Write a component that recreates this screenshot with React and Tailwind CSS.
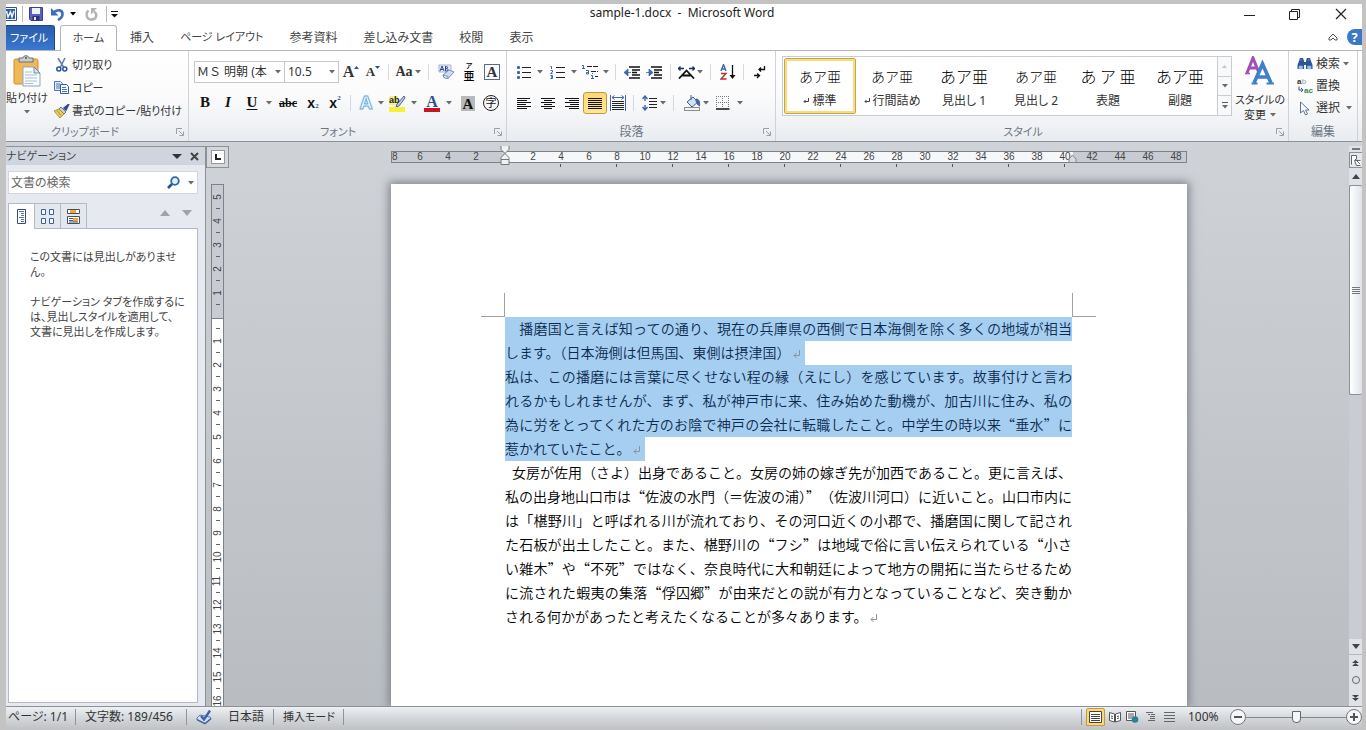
import React from "react";

const UI = "font-['Noto_Sans','Noto_Sans_CJK_JP',sans-serif] [font-feature-settings:'palt']";

const Caret = ({ className = "text-[#6b6b6b]" }) => (
  <svg width="6" height="4" viewBox="0 0 6 4" className={"shrink-0 " + className} fill="currentColor">
    <path d="M0 0h6L3 3.6z" />
  </svg>
);
const Drop = ({ w = "w-2", label }) => (
  <button aria-label={label} className={"flex h-[22px] shrink-0 items-center justify-center " + w}>
    <Caret />
  </button>
);
const Sep = ({ w }) => (
  <span className={"flex h-[22px] shrink-0 items-center justify-center " + w}>
    <span className="h-4 w-px bg-[#d5d8dc]" />
  </span>
);
const Tool = ({ w = "w-[22px]", label, className = "", children }) => (
  <button aria-label={label} className={"flex h-[22px] shrink-0 items-center justify-center " + w + " " + className}>
    {children}
  </button>
);
const Launcher = ({ label }) => (
  <button aria-label={label} className="absolute right-1 bottom-[5px]">
    <svg width="8" height="8" viewBox="0 0 8 8" fill="none" stroke="#9aa0a8">
      <path d="M.5 6V.5H6M3 3l4 4M7.5 3.5v4h-4" />
    </svg>
  </button>
);
const Group = ({ label, launcher = true, className, labelClass = "", children }) => (
  <section className={"relative flex shrink-0 flex-col border-r border-[#cfd3d8] " + className}>
    <div className="min-h-0 flex-1">{children}</div>
    <div className={"h-5 text-center leading-[22px] text-[#6c7684] " + labelClass}>{label}</div>
    {launcher && <Launcher label={label + "の詳細"} />}
  </section>
);
const Lines = ({ rows, w = 14, h = 13, stroke = "#111" }) => (
  <svg width={w} height={h} viewBox={`0 0 ${w} ${h}`} stroke={stroke} fill="none">
    {rows.map(([a, b], i) => (
      <path key={i} d={`M${a} ${i * 2 + 1.5}H${b}`} />
    ))}
  </svg>
);
const ReturnMark = ({ color = "#8a93a0" }) => (
  <svg width="8" height="9" viewBox="0 0 8 9" fill="none" stroke={color} className="ml-0.5 inline-block">
    <path d="M6.5 0v5.5H1M3.5 3L1 5.5 3.5 8" />
  </svg>
);

const WordIcon = () => (
  <svg width="11" height="16" viewBox="0 0 11 16">
    <path d="M0 1.500h10.500v13H0" fill="#fff" stroke="#2b579a" />
    <path d="M0 3h9v10H0z" fill="#2a5fb0" />
    <path d="M.5 5l1.500 6L4.500 6 6 11l2-6" fill="none" stroke="#fff" strokeWidth="1.400" />
  </svg>
);
const SaveIcon = () => (
  <svg width="14" height="14" viewBox="0 0 14 14">
    <path d="M.5.5h13v13H2L.5 12z" fill="#5a5fc4" stroke="#3a3f93" />
    <path d="M3 1h8v6H3z" fill="#eef2fb" />
    <path d="M3.5 9h7v4.5h-7z" fill="#2e3270" />
    <path d="M5 10h2v3H5z" fill="#e8ebf7" />
  </svg>
);
const UndoIcon = () => (
  <svg width="14" height="13" viewBox="0 0 14 13" fill="none">
    <path d="M3 4c4-3 8.500-2 8.500 2 0 3-1.500 4.500-4.500 6" stroke="#3a6cc0" strokeWidth="2.6" />
    <path d="M0 0v7.500h7.500z" fill="#3a6cc0" />
  </svg>
);
const RedoIcon = () => (
  <svg width="13" height="13" viewBox="0 0 13 13" fill="none">
    <path d="M3.5 2.500C.5 5 1 11.500 6.500 11.500S12.500 6 9 3.500" stroke="#b4b4b4" strokeWidth="2.400" />
    <path d="M6 0h6l-6 6.500z" fill="#b4b4b4" />
  </svg>
);
const PasteIcon = () => (
  <svg width="28" height="32" viewBox="0 0 28 32">
    <rect x="1" y="4" width="24" height="25" rx="1.5" fill="#efb95a" stroke="#c98e33" />
    <path d="M6 3h4c0-3 6-3 6 0h4v4H6z" fill="#c9ccd2" stroke="#6c7077" />
    <circle cx="13" cy="3" r="1" fill="#555" />
    <path d="M10 12h11l6 6v13H10z" fill="#fbfdff" stroke="#8fa5c4" />
    <path d="M21 12v6h6z" fill="#dbe6f5" stroke="#6f8bb5" />
    <path d="M12 17h7M12 20h12M12 23h12M12 26h12M12 28.500h8" stroke="#a9bedb" />
  </svg>
);
const CutIcon = () => (
  <svg width="12" height="14" viewBox="0 0 12 14" fill="none">
    <path d="M2 0l5.500 9M9 0L4.500 9" stroke="#6580a8" strokeWidth="1.600" />
    <circle cx="2.800" cy="11" r="2" stroke="#27519e" strokeWidth="1.500" />
    <circle cx="8.800" cy="11" r="2" stroke="#27519e" strokeWidth="1.500" />
  </svg>
);
const CopyIcon = () => (
  <svg width="15" height="13" viewBox="0 0 15 13">
    <path d="M.5.500h6l2 2v7h-8z" fill="#e3eefc" stroke="#4a77b8" />
    <path d="M2 3h4M2 5h5M2 7h5" stroke="#4a77b8" />
    <path d="M6.500 3.500h6l2 2v7h-8z" fill="#f4f9ff" stroke="#2c5a9f" />
    <path d="M8 6.500h4M8 8.500h5M8 10.500h5" stroke="#4a77b8" />
  </svg>
);
const BrushIcon = () => (
  <svg width="16" height="14" viewBox="0 0 16 14">
    <path d="M15 0l-5 4 2 2z" fill="#2c4f8f" stroke="#2c4f8f" strokeWidth="1.500" />
    <path d="M7 3l5 5-2 2-5-5z" fill="#c8cdd6" stroke="#6f7886" />
    <path d="M5 5l5 5-4 4L0 7z" fill="#e8cf55" stroke="#9d8127" strokeWidth=".8" />
    <path d="M3 6.500l4 5" stroke="#b4932d" />
  </svg>
);
const EraserIcon = () => (
  <svg width="17" height="16" viewBox="0 0 17 16">
    <path d="M1 1h12v7H1z" fill="#e6edf9" stroke="#8ea2cc" strokeWidth=".8" />
    <path d="M2 7l2-5 2 5M3 5.500h2M7.500 2v5M7.500 2.500c3 0 3 2 0 2 3.500 0 3.500 2.500 0 2.500" fill="none" stroke="#2d4485" />
    <path d="M5 11l6-5 5 2-6 6.500-4-1z" fill="#cfdcf0" stroke="#5c78ab" strokeWidth=".8" />
    <path d="M5 11l5 1.500v2l-4-1z" fill="#fff" stroke="#5c78ab" strokeWidth=".8" />
  </svg>
);
const BulletIcon = () => (
  <svg width="14" height="14" viewBox="0 0 14 14">
    <path d="M5 2.500h9M5 7.500h9M5 12.500h9" stroke="#222" />
    <g fill="#3c65b0"><rect width="3" height="3" y="1" rx="1" /><rect width="3" height="3" y="6" rx="1" /><rect width="3" height="3" y="11" rx="1" /></g>
  </svg>
);
const NumberIcon = () => (
  <svg width="15" height="14" viewBox="0 0 15 14" fill="none">
    <path d="M6 2.500h9M6 7.500h9M6 12.500h9" stroke="#222" />
    <path d="M.5 1.500h1v2.500M.5 5.500h2v1.500l-2 1.500h2M.5 10.500h2v1.500h-1.500 1.500v1.500h-2" stroke="#3c65b0" />
  </svg>
);
const MultiIcon = () => (
  <svg width="17" height="16" viewBox="0 0 17 16" fill="none">
    <path d="M5 2.500h11M9 7.500h7M13 12.500h3" stroke="#222" strokeDasharray="5 1" />
    <path d="M0 1.500h1.500V5M0 4.500h3M4 6.500h2.500v3.500H4.500V8.500h2M9 11.500h1.500v3.500M9 14.500h3M10 9.500h1" stroke="#3c65b0" />
  </svg>
);
const IndentIcon = ({ out }) => (
  <svg width="16" height="13" viewBox="0 0 16 13" fill="none">
    <path d="M5 1h11M8 4h8M8 6.500h5M8 9h8M5 12h11" stroke="#111" strokeWidth="1.500" />
    {out ? <path d="M0 6.500L4 3v7zM3 6.500h4" fill="#3c65b0" stroke="#3c65b0" strokeWidth=".8" /> : <path d="M7 6.500L3 3v7zM0 6.500h4" fill="#3c65b0" stroke="#3c65b0" strokeWidth=".8" />}
  </svg>
);
const AsianIcon = () => (
  <svg width="17" height="13" viewBox="0 0 17 13" fill="none">
    <path d="M1 12.500l7.500-8 7.500 8M4.500 9.500h8" stroke="#111" strokeWidth="1.800" />
    <path d="M0 2.500h6M17 2.500h-6M2.500.5l-2 2 2 2M14.500.5l2 2-2 2" stroke="#1f2f63" strokeWidth="1.300" />
  </svg>
);
const SortIcon = () => (
  <svg width="16" height="16" viewBox="0 0 16 16" fill="none">
    <path d="M1 7l2.500-6.500L6 7M2 5h3" stroke="#3c65b0" strokeWidth="1.400" />
    <path d="M1 9.500h5L1 15h5.500" stroke="#b03434" strokeWidth="1.400" />
    <path d="M12.500 1v12" stroke="#111" strokeWidth="1.300" />
    <path d="M9.500 11h6l-3 4z" fill="#111" />
  </svg>
);
const MarksIcon = () => (
  <svg width="12" height="13" viewBox="0 0 12 13" fill="none" stroke="#111" strokeWidth="1.300">
    <path d="M10.500 0v3.500H5M7 1.500L5 3.500l2 2M0 9.500h5M3 7.500l2.500 2-2.500 2.500" />
  </svg>
);
const DistributeIcon = () => (
  <svg width="16" height="16" viewBox="0 0 16 16" fill="none">
    <path d="M.5 0v16M15.500 0v16M2 2.500h12M4.500.5l-2.500 2 2.500 2M11.500.5l2.500 2-2.500 2" stroke="#3c65b0" />
    <path d="M2 6.500h12M2 8.500h12M2 10.500h12M2 12.500h12M2 14.500h12" stroke="#222" />
  </svg>
);
const SpacingIcon = () => (
  <svg width="15" height="16" viewBox="0 0 15 16" fill="none">
    <path d="M3 1v5M3 10v5M.5 4L3 1l2.500 3M.5 12L3 15l2.500-3" stroke="#3c65b0" strokeWidth="1.400" />
    <path d="M7 3.500h8M7 6.500h8M7 9.500h8M7 12.500h8" stroke="#222" />
  </svg>
);
const FillIcon = () => (
  <svg width="17" height="16" viewBox="0 0 17 16" fill="none">
    <path d="M3 7l6-5 5 5-6 5z" fill="#cfe0f7" stroke="#3f5f96" />
    <path d="M7 0v5" stroke="#3f5f96" />
    <path d="M12 4c3 0 4 3 3.500 7-2-1-2.500-3-3.500-5z" fill="#3c65b0" stroke="#3f5f96" />
    <rect x=".5" y="12.500" width="15" height="3" fill="#f3f3f3" stroke="#8c8c8c" />
  </svg>
);
const BorderIcon = () => (
  <svg width="14" height="14" viewBox="0 0 14 14" fill="none">
    <path d="M.5 0v12M12.500 0v12M6.500 0v12M0 .5h13M0 6.500h13" stroke="#777" strokeDasharray="1 1" />
    <path d="M0 13h13.500" stroke="#111" strokeWidth="1.500" />
  </svg>
);
const HighlightIcon = () => (
  <svg width="17" height="17" viewBox="0 0 17 17">
    <path d="M0 1h9v9H0z" fill="#f5ef86" />
    <path d="M15 1l-7 8-1 3 3-1 6-8z" fill="#b9c8e3" stroke="#44577e" strokeWidth=".9" />
    <rect y="12" width="16" height="5" fill="#f6ef3c" />
    <text x="0" y="8" fontSize="9" fontFamily="Liberation Sans" fill="#222">ab</text>
  </svg>
);
const StyleAIcon = () => (
  <svg width="30" height="30" viewBox="0 0 30 30" fill="none">
    <path d="M2 17L8 2l6 15M4 12h8" stroke="#a24fb5" strokeWidth="3" />
    <path d="M0 17.500h5" stroke="#a24fb5" strokeWidth="1.500" />
    <path d="M9 27L17.500 8 26 27M12 21h11" stroke="#3f7fcd" strokeWidth="3.600" />
    <path d="M6.500 27.500h6M21.500 27.500H29" stroke="#3f7fcd" strokeWidth="2" />
  </svg>
);
const FindIcon = () => (
  <svg width="16" height="14" viewBox="0 0 16 14">
    <path d="M2 4l1-3h3l1 3v8H.5V8zM14 4l-1-3h-3L9 4v8h6.500V8z" fill="#2b5797" />
    <path d="M7 5h2v3H7z" fill="#2b5797" />
    <path d="M2 9h3.500v3H2zM10.500 9H14v3h-3.500zM3 3h2M11 3h2" fill="#9dbbe6" stroke="#9dbbe6" strokeWidth=".5" />
  </svg>
);
const ReplaceIcon = () => (
  <svg width="17" height="16" viewBox="0 0 17 16">
    <text x="0" y="6" fontSize="8" fontWeight="bold" fontFamily="Liberation Sans" fill="#333">a<tspan fill="#b9b9b9">b</tspan></text>
    <text x="7" y="15" fontSize="8" fontWeight="bold" fontFamily="Liberation Sans" fill="#2e8b3e">ac</text>
    <path d="M2 8.500v3.500h4M4 10l2 2-2 2" fill="none" stroke="#2b5797" />
  </svg>
);
const CursorIcon = () => (
  <svg width="11" height="15" viewBox="0 0 11 15">
    <path d="M1.500 1v11l3-2.500 2 4.500 2-1-2-4h3.500z" fill="#fff" stroke="#5d7297" />
  </svg>
);

const OutlineA = () => (
  <span className="font-['Liberation_Sans',sans-serif] text-[18px] leading-none font-bold text-white [-webkit-text-stroke:1px_#6fb0dc] [text-shadow:0_0_2px_#8cc4ea]">A</span>
);

const tabs = [
  ["挿入", "text-xs"],
  ["ページ レイアウト", "text-[11px]"],
  ["参考資料", "text-xs"],
  ["差し込み文書", "text-xs"],
  ["校閲", "text-xs"],
  ["表示", "text-xs"],
];
const styles = [
  ["あア亜", "標準", true, "text-[14px]"],
  ["あア亜", "行間詰め", true, "text-[14px]"],
  ["あア亜", "見出し 1", false, "text-[16px]"],
  ["あア亜", "見出し 2", false, "text-[14px]"],
  ["あ ア 亜", "表題", false, "text-[16px]"],
  ["あア亜", "副題", false, "text-[16px]"],
];
const lines = [
  { text: "　播磨国と言えば知っての通り、現在の兵庫県の西側で日本海側を除く多くの地域が相当", selected: true },
  { text: "します。（日本海側は但馬国、東側は摂津国）", selected: true, end: true },
  { text: "私は、この播磨には言葉に尽くせない程の縁（えにし）を感じています。故事付けと言わ", selected: true },
  { text: "れるかもしれませんが、まず、私が神戸市に来、住み始めた動機が、加古川に住み、私の", selected: true },
  { text: "為に労をとってくれた方のお陰で神戸の会社に転職したこと。中学生の時以来“垂水”に", selected: true },
  { text: "惹かれていたこと。", selected: true, end: true },
  { text: "女房が佐用（さよ）出身であること。女房の姉の嫁ぎ先が加西であること。更に言えば、", indent: true },
  { text: "私の出身地山口市は“佐波の水門（＝佐波の浦）”（佐波川河口）に近いこと。山口市内に" },
  { text: "は「椹野川」と呼ばれる川が流れており、その河口近くの小郡で、播磨国に関して記され" },
  { text: "た石板が出土したこと。また、椹野川の“フシ”は地域で俗に言い伝えられている“小さ" },
  { text: "い雑木”や“不死”ではなく、奈良時代に大和朝廷によって地方の開拓に当たらせるため" },
  { text: "に流された蝦夷の集落“俘囚郷”が由来だとの説が有力となっていることなど、突き動か" },
  { text: "される何かがあったと考えたくなることが多々あります。", end: true },
];
const evens = (a, b) => {
  const r = [];
  for (let i = a; i <= b; i += 2) r.push(i);
  return r;
};

function TitleBar() {
  return (
    <header className="relative flex h-5 shrink-0 items-center bg-white">
      <WordIcon />
      <span className="mr-[6px] ml-[5px] h-4 w-px bg-[#bbb]" />
      <button aria-label="上書き保存"><SaveIcon /></button>
      <button aria-label="元に戻す" className="ml-2"><UndoIcon /></button>
      <button aria-label="元に戻す一覧" className="ml-[5px]"><Caret className="text-black" /></button>
      <button aria-label="やり直し" className="ml-[9px]"><RedoIcon /></button>
      <span className="mr-1 ml-2 h-4 w-px bg-[#bbb]" />
      <button aria-label="クイック アクセスのカスタマイズ">
        <svg width="7" height="7" viewBox="0 0 7 7"><path d="M0 .5h7" stroke="#111" /><path d="M0 3h7L3.500 6.500z" fill="#111" /></svg>
      </button>
      <h1 className="absolute inset-x-0 -top-px pr-1 text-center text-xs leading-5 text-[#222]">sample-1.docx&nbsp; -&nbsp; Microsoft Word</h1>
      <div className="relative ml-auto flex items-center pr-[15px]">
        <button aria-label="最小化" className="mr-[34px]"><svg width="11" height="11" viewBox="0 0 11 11" stroke="#222"><path d="M0 6.500h11" /></svg></button>
        <button aria-label="元のサイズに戻す" className="mr-[35px]"><svg width="11" height="11" viewBox="0 0 11 11" fill="none" stroke="#222"><path d="M.5 2.500h8v8h-8zM2.500 2.500v-2h8v8h-2" /></svg></button>
        <button aria-label="閉じる"><svg width="12" height="12" viewBox="0 0 12 12" stroke="#222" strokeWidth="1.200"><path d="M1 1l10 10M11 1L1 11" /></svg></button>
      </div>
    </header>
  );
}

function TabBar() {
  return (
    <nav className="flex h-[27px] shrink-0 items-end border-b border-[#b3b7bd] bg-white text-xs">
      <button className="mr-[5px] flex h-[25px] w-[49px] items-center justify-start rounded-tr-[3px] border-t border-r border-[#1e4787] bg-linear-to-b from-[#2a5cac] to-[#3a78d0] pl-1 text-[11px] text-white">ファイル</button>
      <button className="-mb-px h-[26px] w-[57px] rounded-t-[3px] border border-b-0 border-[#b3b7bd] bg-white text-[11px] text-[#444]">ホーム</button>
      {tabs.map(([t, size]) => (
        <button key={t} className={"h-[26px] px-[13px] pt-px text-[#444] " + size}>{t}</button>
      ))}
      <div className="ml-auto flex h-[26px] items-center gap-[9px]">
        <button aria-label="リボンの最小化">
          <svg width="10" height="8" viewBox="0 0 10 8" fill="#fff" stroke="#555"><path d="M1 5l4-4 4 4v2H7L5 5 3 7H1z" /></svg>
        </button>
        <button aria-label="ヘルプ" className="h-4 w-[15px] rounded-l-full bg-[#3d78c6] text-center text-[13px] leading-4 font-bold text-white">?</button>
      </div>
    </nav>
  );
}

function Ribbon() {
  return (
    <div className="flex h-[91px] shrink-0 border-b border-[#8c9097] bg-linear-to-b from-white via-[#fbfbfc] to-[#e9ecf0] text-xs text-[#333]">
      <Group label="クリップボード" labelClass="text-[11px] pr-6" className="w-[183px]">
        <div className="flex pt-1 text-[11px]">
          <button className="flex w-[42px] flex-col items-center whitespace-nowrap">
            <PasteIcon />
            <span className="mt-[3px] leading-4">貼り付け</span>
            <span className="flex h-3 items-center"><Caret /></span>
          </button>
          <div className="ml-1.5 flex flex-col items-start">
            <button className="flex h-[23px] items-center pb-1 pl-0.5 leading-4"><CutIcon /><span className="ml-1">切り取り</span></button>
            <button className="flex h-[23px] items-center pb-1 leading-4"><CopyIcon /><span className="ml-[3px]">コピー</span></button>
            <button className="flex h-[23px] items-center pb-1 leading-4 whitespace-nowrap"><BrushIcon /><span className="ml-0.5">書式のコピー/貼り付け</span></button>
          </div>
        </div>
      </Group>

      <Group label="フォント" labelClass="text-[11px] pr-6" className="w-[318px] pl-[5px]">
        <div className="flex pt-2.5">
          <label className="relative block w-[91px] shrink-0">
            <select aria-label="フォント" className="h-[22px] w-full appearance-none border border-[#c5c9ce] bg-white pr-3 pl-0.5 text-xs [font-feature-settings:normal]"><option>ＭＳ 明朝 (本</option></select>
            <span className="pointer-events-none absolute top-[9px] right-1"><Caret /></span>
          </label>
          <label className="relative -ml-px block w-[55px] shrink-0">
            <select aria-label="フォント サイズ" className="h-[22px] w-full appearance-none border border-[#c5c9ce] bg-white pl-[3px] text-xs"><option>10.5</option></select>
            <span className="pointer-events-none absolute top-[9px] right-1"><Caret /></span>
          </label>
          <Tool w="w-6" label="フォントの拡大"><span className="font-['Liberation_Serif',serif] text-[16px] font-bold">A</span><svg width="5" height="3" className="-mt-2.5"><path d="M0 3h5L2.500 0z" fill="#2f4f93" /></svg></Tool>
          <Tool w="w-5" label="フォントの縮小"><span className="font-['Liberation_Serif',serif] text-[13px] font-bold">A</span><svg width="5" height="3" className="-mt-2.5"><path d="M0 0h5L2.500 3z" fill="#2f4f93" /></svg></Tool>
          <Sep w="w-2.5" />
          <Tool label="文字種の変換"><span className="font-['Liberation_Serif',serif] text-[14px] font-bold">Aa</span></Tool>
          <Drop w="w-1.5" label="文字種の一覧" />
          <Sep w="w-3.5" />
          <Tool label="書式のクリア"><EraserIcon /></Tool>
          <Tool w="w-6" label="ルビ"><span className="flex flex-col items-center font-medium text-black"><span className="text-[7px] leading-[8px]">ア</span><span className="text-[11px] leading-[12px]">亜</span></span></Tool>
          <Tool label="囲み線"><span className="h-4 w-4 border border-[#51689a] text-center font-['Liberation_Serif',serif] text-[15px] leading-[15px] font-bold">A</span></Tool>
        </div>
        <div className="flex pt-[9px] font-['Liberation_Serif',serif] font-bold text-[#111]">
          <Tool label="太字"><span className="text-[15px]">B</span></Tool>
          <Tool w="w-6" label="斜体"><span className="text-[15px] italic">I</span></Tool>
          <Tool w="w-6" label="下線"><span className="text-[15px] underline underline-offset-2">U</span></Tool>
          <Drop w="w-2.5" label="下線の種類" />
          <Tool w="w-7" label="取り消し線"><span className="text-[12px] line-through">abc</span></Tool>
          <Tool label="下付き"><span className="font-['Liberation_Sans',sans-serif] text-[14px]">x</span><span className="mt-2 text-[7px] text-[#2f4f93]">2</span></Tool>
          <Tool label="上付き"><span className="font-['Liberation_Sans',sans-serif] text-[14px]">x</span><span className="-mt-2 text-[7px] text-[#2f4f93]">2</span></Tool>
          <Sep w="w-[9px]" />
          <Tool label="文字の効果"><OutlineA /></Tool>
          <Drop label="文字の効果の一覧" />
          <Tool w="w-6" label="蛍光ペンの色"><HighlightIcon /></Tool>
          <Drop w="w-2.5" label="蛍光ペンの一覧" />
          <Tool w="w-[26px]" label="フォントの色"><span className="w-4 border-b-4 border-[#c4161c] text-center text-[16px] leading-[13px] text-[#2f4f93]">A</span></Tool>
          <Drop label="フォントの色の一覧" />
          <Tool w="w-[30px]" label="文字の網かけ"><span className="h-[15px] w-[14px] bg-[#b9b9b9] text-center text-[15px] leading-4">A</span></Tool>
          <Tool w="w-4" label="囲い文字"><span className="h-4 w-4 rounded-full border border-[#222] text-center font-['Noto_Sans_CJK_JP',sans-serif] text-[11px] leading-[13px] font-normal">字</span></Tool>
        </div>
      </Group>

      <Group label="段落" labelClass="pr-6" className="w-[269px] pl-[5px]">
        <div className="flex pt-2.5">
          <Tool w="w-6" label="箇条書き"><BulletIcon /></Tool><Drop label="箇条書きの一覧" />
          <Tool w="w-[26px]" label="段落番号"><NumberIcon /></Tool><Drop label="段落番号の一覧" />
          <Tool w="w-6" label="アウトライン"><MultiIcon /></Tool><Drop label="アウトラインの一覧" />
          <Sep w="w-[11px]" />
          <Tool label="インデントを減らす"><IndentIcon out /></Tool>
          <Tool label="インデントを増やす"><IndentIcon /></Tool>
          <Sep w="w-2.5" />
          <Tool label="拡張書式"><AsianIcon /></Tool><Drop w="w-1.5" label="拡張書式の一覧" />
          <Sep w="w-3.5" />
          <Tool label="並べ替え"><SortIcon /></Tool>
          <Sep w="w-2" />
          <Tool w="w-[26px]" label="編集記号の表示"><MarksIcon /></Tool>
        </div>
        <div className="flex pt-[9px]">
          <Tool w="w-6" label="左揃え"><Lines rows={[[0, 13], [0, 10], [0, 14], [0, 9], [0, 14], [0, 10]]} /></Tool>
          <Tool w="w-6" label="中央揃え"><Lines rows={[[0, 14], [3, 11], [0, 14], [3, 11], [0, 14], [3, 11]]} /></Tool>
          <Tool w="w-[23px]" label="右揃え"><Lines rows={[[0, 14], [4, 14], [0, 14], [5, 14], [0, 14], [4, 14]]} /></Tool>
          <Tool w="w-6" label="両端揃え" className="rounded-[3px] border border-[#c29b3c] bg-linear-to-b from-[#fbd877] to-[#ffe692]"><Lines rows={[[0, 14], [0, 14], [0, 14], [0, 14], [0, 14], [0, 14]]} /></Tool>
          <Tool label="均等割り付け"><DistributeIcon /></Tool>
          <Sep w="w-[9px]" />
          <Tool label="行間"><SpacingIcon /></Tool><Drop w="w-1.5" label="行間の一覧" />
          <Sep w="w-[15px]" />
          <Tool label="塗りつぶし"><FillIcon /></Tool><Drop w="w-1.5" label="塗りつぶしの一覧" />
          <Tool w="w-7" label="罫線"><BorderIcon /></Tool><Drop w="w-1.5" label="罫線の一覧" />
        </div>
      </Group>

      <Group label="スタイル" labelClass="text-[11px] pr-5" className="min-w-0 flex-1 pr-1 pl-[6px]">
        <div className="flex pt-[5px]">
          <div className="flex h-[60px] min-w-0 flex-1 border border-[#c9cdd2] bg-white p-px">
            {styles.map(([sample, name, mark, size], i) => (
              <button key={name} className={"flex min-w-0 flex-1 flex-col items-center rounded-[2px] border whitespace-nowrap " + (i === 0 ? "border-[#c9a54a] shadow-[inset_0_0_0_2px_#f8dc84]" : "border-transparent")}>
                <span className={"mt-[5px] h-6 font-['Noto_Sans_CJK_JP',sans-serif] leading-6 font-light text-black [font-feature-settings:normal] " + size}>{sample}</span>
                <span className="flex items-center gap-[3px] leading-[26px]">
                  {mark && <svg width="6" height="6" viewBox="0 0 6 6" fill="none" stroke="#444"><path d="M5.500 0v3.500H1M2.500 2L1 3.500 2.500 5" /></svg>}
                  {name}
                </span>
              </button>
            ))}
          </div>
          <div className="flex h-[60px] w-[14px] shrink-0 flex-col border border-l-0 border-[#c9cdd2] bg-[#f8f9fa]">
            <button aria-label="上へ" className="flex flex-1 items-center justify-center"><svg width="5" height="3"><path d="M0 3h5L2.500 0z" fill="#c4c4c4" /></svg></button>
            <button aria-label="下へ" className="flex flex-1 items-center justify-center border-y border-[#c9cdd2]"><Caret /></button>
            <button aria-label="その他" className="flex flex-1 flex-col items-center justify-center gap-0.5"><span className="h-px w-[6px] bg-[#555]" /><Caret /></button>
          </div>
          <button className="ml-1 flex w-[48px] shrink-0 flex-col items-center text-[11px] whitespace-nowrap">
            <StyleAIcon />
            <span className="mt-1.5 leading-[15px]">スタイルの</span>
            <span className="flex items-center gap-1 leading-[15px]">変更 <Caret /></span>
          </button>
        </div>
      </Group>

      <Group label="編集" launcher={false} className="w-[69px]">
        <div className="flex flex-col items-start pt-0.5 pl-2">
          <button className="flex h-[22px] items-center"><FindIcon /><span className="mx-[3px]">検索</span><Caret /></button>
          <button className="flex h-[22px] items-center"><ReplaceIcon /><span className="mx-0.5">置換</span></button>
          <button className="flex h-[22px] items-center pl-0.5"><CursorIcon /><span className="mx-1.5">選択</span><Caret /></button>
        </div>
      </Group>
      <div className="shrink-0 basis-1" />
    </div>
  );
}

function NavPane() {
  return (
    <aside className="flex w-[200px] shrink-0 flex-col border-t border-r border-[#8c9097] bg-[#e6e9ef] text-[11px] text-[#444]">
      <div className="flex h-[18px] shrink-0 items-center bg-[#cfd5df] pr-[6px] leading-[18px]">
        <h2>ナビゲーション</h2>
        <button aria-label="オプション" className="ml-auto"><svg width="10" height="5"><path d="M0 0h10L5 5z" fill="#333" /></svg></button>
        <button aria-label="閉じる" className="ml-2"><svg width="9" height="9" viewBox="0 0 9 9" stroke="#444" strokeWidth="2"><path d="M1 1l7 7M8 1L1 8" /></svg></button>
      </div>
      <div className="mt-[6px] mr-[7px] ml-0.5 flex h-[23px] shrink-0 items-center border border-[#d2d6dc] bg-white pr-[3px]">
        <input aria-label="文書の検索" placeholder="文書の検索" className="min-w-0 flex-1 pl-0.5 text-xs outline-none placeholder:text-[#666]" />
        <button aria-label="検索">
          <svg width="13" height="13" viewBox="0 0 13 13" fill="none"><circle cx="8" cy="5" r="3.800" stroke="#2c6aa8" strokeWidth="1.800" fill="#e3f1fb" /><path d="M5 8l-4 4" stroke="#28528f" strokeWidth="2.600" /></svg>
        </button>
        <button aria-label="検索オプション" className="ml-2"><Caret /></button>
      </div>
      <div className="relative -mb-px mt-[9px] mr-[7px] ml-0.5 flex h-[26px] shrink-0">
        <button aria-label="見出し" className="flex w-[27px] items-center justify-center border border-b-0 border-[#b4bac4] bg-white">
          <svg width="10" height="15" viewBox="0 0 10 15" fill="none" stroke="#2f4f80"><path d="M.5.500h8v14h-8z" /><path d="M2 2.500h5M4 4.500h3M4 6.500h3M2 8.500h5M4 10.500h3M4 12.500h3" stroke="#5a7096" /></svg>
        </button>
        <button aria-label="ページ" className="-ml-px flex w-[27px] items-center justify-center border border-[#b4bac4] bg-[#e3e7ee]">
          <svg width="13" height="15" viewBox="0 0 13 15" fill="#f4f8fd" stroke="#3f5f96"><path d="M.5.500h4v5h-4zM8.500.500h4v5h-4zM.5 9.500h4v5h-4zM8.500 9.500h4v5h-4z" /></svg>
        </button>
        <button aria-label="結果" className="-ml-px flex w-[27px] items-center justify-center border border-[#b4bac4] bg-[#e3e7ee]">
          <svg width="13" height="15" viewBox="0 0 13 15"><path d="M.5.500h12v4H.5zM.5 7.500h12v7H.5z" fill="#fff" stroke="#4a4f57" /><path d="M3 1h6v3H3zM6 9h5v4H6z" fill="#e9a93a" /><path d="M2 9.500h4M2 11.500h4M2 13h9" stroke="#3f5f96" /></svg>
        </button>
        <div className="flex flex-1 items-center justify-end gap-3 border-b border-[#b4bac4] pr-[6px] pb-1.5">
          <svg width="10" height="6"><path d="M0 6h10L5 0z" fill="#9fa3a9" /></svg>
          <svg width="10" height="6"><path d="M0 0h10L5 6z" fill="#9fa3a9" /></svg>
        </div>
      </div>
      <div className="mr-[7px] mb-[3px] ml-0.5 flex-1 border border-t-0 border-[#b4bac4] bg-white pt-[21px] pl-[21px] leading-[15px] whitespace-nowrap">
        <p>この文書には見出しがありませ<br />ん。</p>
        <p className="mt-[15px]">ナビゲーション タブを作成するに<br />は、見出しスタイルを適用して、<br />文書に見出しを作成します。</p>
      </div>
    </aside>
  );
}

function VNum({ n }) {
  return (
    <div className="relative flex h-6 shrink-0 items-center justify-center">
      <span className="-rotate-90">{n}</span>
      <span className="absolute bottom-0 left-1 h-px w-1 bg-[#666]" />
    </div>
  );
}

function VerticalRuler() {
  return (
    <div className="flex w-[23px] shrink-0 flex-col items-center font-['Liberation_Sans',sans-serif] text-[10px] leading-none text-[#444]">
      <button aria-label="タブ" className="mb-4 flex h-[22px] w-full shrink-0 items-center justify-center border border-[#8c9097] bg-[#d4d8dd]">
        <span className="flex h-[14px] w-[14px] items-center justify-center border border-[#999] bg-white"><svg width="6" height="6"><path d="M1 0v5h5" stroke="#222" strokeWidth="2" fill="none" /></svg></span>
      </button>
      <div className="flex min-h-0 w-[13px] flex-1 flex-col overflow-hidden border-x border-t border-[#7d828a] bg-white">
        <div className="h-[134px] shrink-0 border-b border-[#7d828a] bg-[#c8ccd2]">
          {[5, 4, 3, 2, 1].map((n) => <VNum key={n} n={n} />)}
        </div>
        <div className="flex h-2.5 shrink-0 items-end justify-center"><span className="h-px w-1 bg-[#666]" /></div>
        {Array.from({ length: 16 }, (_, i) => <VNum key={i} n={i + 1} />)}
      </div>
    </div>
  );
}

function HorizontalRuler() {
  const cell = (n) => <span key={n} className="w-7 shrink-0 text-center">{n}</span>;
  return (
    <div className="relative mx-auto h-5 w-[796px] shrink-0 font-['Liberation_Sans',sans-serif] text-[10px] text-[#444]">
      <div className="mt-1 flex h-3 border border-[#7d828a] bg-[#c8ccd2] leading-[10px]">
        <div className="flex w-[113px] shrink-0"><span className="w-3.5">8</span>{[6, 4, 2].map(cell)}</div>
        <div className="flex w-[568px] shrink-0 bg-[#f6f7f9] pl-3.5">{evens(2, 40).map(cell)}</div>
        <div className="flex min-w-0 flex-1 pl-[5px]">{evens(42, 48).map(cell)}</div>
      </div>
      <div className="flex pl-[114px]">
        {Array.from({ length: 10 }, (_, i) => <span key={i} className="mt-px h-[3px] w-14 border-r border-[#555]" />)}
      </div>
      <svg width="10" height="20" viewBox="0 0 10 20" className="absolute top-[-2px] left-[109px]" fill="#f0f1f3" stroke="#777">
        <path d="M1 .500h8v4l-4 4-4-4zM5 8.500l4 4v2H1v-2zM1 14.500h8v5H1z" />
      </svg>
      <svg width="9" height="9" viewBox="0 0 9 9" className="absolute top-[7px] left-[677px]" fill="#d8dadd" stroke="#888"><path d="M4.500 1L8 5v3.500H1V5z" /></svg>
    </div>
  );
}

function Document() {
  return (
    <main className="flex min-w-0 flex-1 flex-col overflow-hidden pt-px">
      <HorizontalRuler />
      <article lang="ja" className="mx-auto mt-[17px] w-[796px] flex-1 bg-white shadow-[0_0_9px_2px_#7d8188]">
        <div className="flex justify-between pt-[109px] pr-[91px] pl-[90px]">
          <span className="h-6 w-6 border-r border-b border-[#a0a0a0]" />
          <span className="h-6 w-6 border-b border-l border-[#a0a0a0]" />
        </div>
        <div className="mr-[115px] ml-[114px] font-['Noto_Sans_CJK_JP',sans-serif] text-[14px] leading-[22px] font-[350] whitespace-nowrap text-black [font-feature-settings:'fwid']">
          {lines.map(({ text, selected, end, indent }) => (
            <div key={text} className={"h-6 " + (end ? "w-fit pr-1 " : "[text-align-last:justify] ") + (indent ? "pl-[7px] " : "") + (selected ? "bg-[#a6cef1] text-[#0b2a4d]" : "")}>
              {text}{end && <ReturnMark />}
            </div>
          ))}
        </div>
      </article>
    </main>
  );
}

function ScrollBar() {
  return (
    <div className="flex w-[13px] shrink-0 flex-col items-center overflow-hidden bg-[#dfe3e8]">
      <span className="mt-0.5 h-0.5 w-2 shrink-0 bg-[#777]" />
      <button aria-label="ルーラー" className="mt-0.5 flex h-4 w-full shrink-0 items-center justify-center border border-r-0 border-[#8c9097] bg-[#e4e7eb]">
        <svg width="10" height="11" viewBox="0 0 10 11" fill="#fff" stroke="#666"><path d="M.5 9.500v-9h5v4M9.500 5.500h-6l2 5h4" /><path d="M4 4l5 5" /></svg>
      </button>
      <button aria-label="上へスクロール" className="flex h-[17px] shrink-0 items-center"><svg width="8" height="5"><path d="M0 5h8L4 0z" fill="#444" /></svg></button>
      <div className="flex w-full flex-1 flex-col bg-[#c9cdd3]">
        <div className="flex h-[210px] w-full flex-col items-center justify-center gap-px rounded-[2px] border border-r-0 border-[#8c9097] bg-linear-to-r from-white to-[#dfe3e9]">
          {[0, 1, 2, 3].map((i) => <span key={i} className="h-px w-2 bg-[#777]" />)}
        </div>
      </div>
      <button aria-label="下へスクロール" className="flex h-4 w-full shrink-0 items-center justify-center border-b border-[#b4b8be]"><svg width="8" height="5"><path d="M0 0h8L4 5z" fill="#444" /></svg></button>
      <button aria-label="前のページ" className="flex h-4 shrink-0 items-center"><svg width="7" height="7"><path d="M0 3h7L3.500 0zM0 6h7L3.500 3z" fill="#444" /></svg></button>
      <button aria-label="ブラウズの対象" className="flex h-[18px] shrink-0 items-center"><span className="h-2 w-2 rounded-full border border-[#666]" /></button>
      <button aria-label="次のページ" className="flex h-[17px] shrink-0 items-center"><svg width="7" height="7"><path d="M0 1h7L3.500 4zM0 4h7L3.500 7z" fill="#444" /></svg></button>
    </div>
  );
}

const Bar = ({ className = "" }) => <span className={"h-4 w-px bg-[#8f949b] " + className} />;

function StatusBar() {
  return (
    <footer className="flex h-6 shrink-0 items-start border-t border-[#8c9097] bg-linear-to-b from-[#eef0f2] via-[#d3d6da] to-[#bfc1c4] text-xs text-[#333]">
      <div className="flex h-5 items-center">
        <span className="w-[69px] pl-0.5">ページ: 1/1</span><Bar />
        <span className="w-[110px] pl-[9px] whitespace-nowrap">文字数: 189/456</span><Bar />
        <button aria-label="文章校正" className="w-[41px] pl-[9px]">
          <svg width="16" height="15" viewBox="0 0 16 15"><path d="M1 8l3-3 10 2 1 2-6 5-8-4z" fill="#d5e0f2" stroke="#5b79b0" /><path d="M1 9.500l8 4 6-5" fill="none" stroke="#3f5f9e" strokeWidth="1.300" /><path d="M5 6l3 3.500 6-9" fill="none" stroke="#3a62ae" strokeWidth="2.400" /></svg>
        </button>
        <span className="w-[45px]">日本語</span><Bar />
        <span className="w-[69px] pl-[9px] text-[11px] whitespace-nowrap">挿入モード</span><Bar />
      </div>
      <div className="ml-auto flex h-5 items-center">
        <Bar className="mr-1" />
        <button aria-label="印刷レイアウト" className="flex h-[18px] w-[19px] items-center justify-center rounded-t-[2px] border border-[#c29b3c] bg-[#fbd877]">
          <svg width="13" height="12" viewBox="0 0 13 12" fill="#fff" stroke="#444"><path d="M.5.500h12v11H.5zM2 3.500h9M2 5.500h9M2 7.500h9M2 9.500h9" /></svg>
        </button>
        <button aria-label="全画面閲覧" className="ml-1"><svg width="12" height="11" viewBox="0 0 12 11" fill="#fff" stroke="#555"><path d="M.5.500l5 1.500v8l-5-1.500zM11.500.500l-5 1.500v8l5-1.500zM2 4l2 .5M2 6l2 .5M10 4l-2 .5M10 6l-2 .5" /></svg></button>
        <button aria-label="Web レイアウト" className="ml-[5px]"><svg width="13" height="12" viewBox="0 0 13 12"><path d="M.5.500h9v9h-9zM2 3h6M2 5h6M2 7h4" fill="#fff" stroke="#555" /><circle cx="9" cy="8.500" r="3.300" fill="#2d7f93" /></svg></button>
        <button aria-label="アウトライン" className="ml-[7px]"><svg width="10" height="10" viewBox="0 0 10 10" stroke="#666" fill="none"><path d="M0 .5h7M2 2.500h2M5 2.500h4M4 4.500h5M4 6.500h5M2 8.500h7" /></svg></button>
        <button aria-label="下書き" className="ml-2"><svg width="11" height="10" viewBox="0 0 11 10" stroke="#666" fill="none"><path d="M0 .5h11M0 3.500h11M0 6.500h11M0 9.500h11" /></svg></button>
        <button className="ml-[13px] w-[35px] text-left">100%</button>
        <button aria-label="縮小" className="ml-[7px] flex h-4 w-4 shrink-0 items-center justify-center rounded-full border border-[#777] bg-[#f5f6f7]"><span className="h-0.5 w-2 bg-[#555]" /></button>
        <input type="range" aria-label="ズーム" defaultValue="50" className="h-4 w-[100px] appearance-none bg-[linear-gradient(#84888e,#84888e)] bg-[length:100%_1px] bg-center bg-no-repeat [&::-webkit-slider-thumb]:h-3 [&::-webkit-slider-thumb]:w-[9px] [&::-webkit-slider-thumb]:appearance-none [&::-webkit-slider-thumb]:rounded-b-[4px] [&::-webkit-slider-thumb]:border [&::-webkit-slider-thumb]:border-[#666] [&::-webkit-slider-thumb]:bg-[#f5f6f7]" />
        <button aria-label="拡大" className="flex h-4 w-4 shrink-0 items-center justify-center rounded-full border border-[#777] bg-[#f5f6f7]"><svg width="8" height="8" stroke="#555" strokeWidth="2"><path d="M0 4h8M4 0v8" /></svg></button>
      </div>
    </footer>
  );
}

export default function App() {
  return (
    <div lang="ja" className={"flex h-screen flex-col overflow-hidden bg-[#c3c3c3] pt-1 pr-1 pl-1.5 " + UI}>
      <TitleBar />
      <TabBar />
      <Ribbon />
      <div className="flex min-h-0 flex-1 bg-linear-to-b from-[#cfd2d7] to-[#b9bdc2] pt-1">
        <NavPane />
        <VerticalRuler />
        <Document />
        <ScrollBar />
      </div>
      <StatusBar />
    </div>
  );
}
